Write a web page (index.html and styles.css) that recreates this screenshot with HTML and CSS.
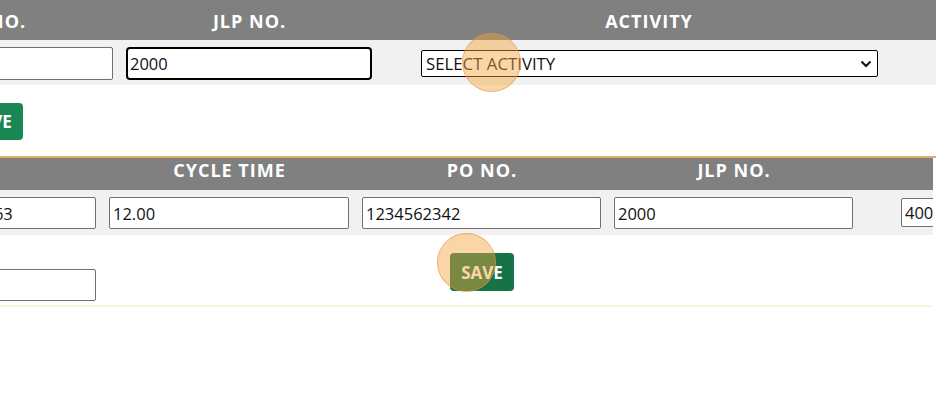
FILE: index.html
```html
<!DOCTYPE html>
<html lang="en">
<head>
<meta charset="utf-8">
<title>Entry</title>
<link rel="stylesheet" href="styles.css">
</head>
<body>
<div class="viewport">
  <section class="sec sec1">
    <div class="grid g1 head">
      <div class="th">PO NO.</div>
      <div class="th">JLP NO.</div>
      <div class="th">ACTIVITY</div>
      <div class="th"></div>
    </div>
    <div class="grid g1 row">
      <div class="td c-a"><input class="inp" type="text" value=""></div>
      <div class="td c-b"><input class="inp focus" type="text" value="2000"></div>
      <div class="td c-c">
        <div class="sel-wrap">
          <select class="sel"><option>SELECT ACTIVITY</option></select>
          <svg class="chev" width="12" height="8" viewBox="0 0 12 8"><path d="M1.5 1.5 L6 6 L10.5 1.5" fill="none" stroke="#111" stroke-width="2"/></svg>
        </div>
      </div>
      <div class="td"></div>
    </div>
    <div class="grid g1 actions">
      <div class="act-cell"><button class="btn">SAVE</button></div>
    </div>
  </section>

  <section class="sec sec2">
    <div class="grid g2 head">
      <div class="th"></div>
      <div class="th">CYCLE TIME</div>
      <div class="th">PO NO.</div>
      <div class="th">JLP NO.</div>
      <div class="th"></div>
    </div>
    <div class="grid g2 row">
      <div class="td c-a"><input class="inp" type="text" value="HOUSING-ASSY-763"></div>
      <div class="td c-n"><input class="inp" type="text" value="12.00"></div>
      <div class="td c-n"><input class="inp" type="text" value="1234562342"></div>
      <div class="td c-n"><input class="inp" type="text" value="2000"></div>
      <div class="td c-last"><input class="inp small" type="text" value="4000"></div>
    </div>
    <div class="grid g2 actions">
      <div class="act-cell c-a"><input class="inp low" type="text" value=""></div>
      <div class="act-cell"></div>
      <div class="act-cell"><button class="btn dark">SAVE</button></div>
    </div>
  </section>

  <span class="click click-1"></span>
  <span class="click click-2"></span>
</div>
</body>
</html>
```

FILE: styles.css
```css
* { box-sizing: border-box; }
html, body { margin: 0; padding: 0; background: #fff; }
body { font-family: "Open Sans", "Noto Sans", Arial, sans-serif; }

.viewport {
  position: relative;
  width: 936px;
  height: 406px;
  overflow: hidden;
}

.sec { overflow: hidden; }
.sec1 {
  margin-left: -138px;
  width: 1274px;
  border-bottom: 2px solid #dcb06c;
}
.sec2 {
  margin-left: -149px;
  width: 1082px;
  border-bottom: 2px solid #fbf5d4;
}

.grid { display: grid; }
.g1 { grid-template-columns: 258px 259px 540px 217px; }
.g2 { grid-template-columns: 252px 253px 252px 252px 273px; }

.head { background: #808080; }
.th {
  color: #fff;
  font-weight: 700;
  font-size: 18px;
  line-height: 24px;
  text-align: center;
  letter-spacing: 1px;
  white-space: nowrap;
}
.sec1 .head { height: 40px; padding-top: 9px; }
.sec2 .head { height: 32px; padding-top: 0; }

.row { background: #f1f1f1; height: 45px; }
.td { padding: 7px 7px 0 6px; }
.sec1 .td.c-c { padding: 10px 0 0 42px; }
.td.c-last { padding: 8px 0 0 41px; }

.inp {
  display: block;
  width: 100%;
  height: 32px;
  border: 1px solid #707070;
  border-radius: 2px;
  background: #fff;
  font-family: inherit;
  font-size: 16.5px;
  color: #111;
  padding: 0 3px;
  outline: none;
}
.sec1 .inp { height: 33px; }
.inp.focus {
  border: 2px solid #000;
  border-radius: 4px;
  padding: 0 2px;
}
.inp.small { width: 120px; height: 29px; }
.inp.low { margin-top: 34px; }

.sel-wrap {
  position: relative;
  width: 457px;
  height: 27px;
}
.sel {
  appearance: none;
  -webkit-appearance: none;
  display: block;
  width: 100%;
  height: 27px;
  border: 1px solid #000;
  border-radius: 2px;
  background: #fff;
  font-family: inherit;
  font-size: 16.8px;
  color: #111;
  padding: 0 4px;
  outline: none;
}
.chev {
  position: absolute;
  right: 6px;
  top: 10px;
  pointer-events: none;
}

.actions { align-items: start; }
.sec1 .actions { height: 71px; }
.sec2 .actions { height: 70px; }
.act-cell {
  display: flex;
  justify-content: center;
  padding-top: 18px;
}
.act-cell.c-a { display: block; padding: 0 7px 0 6px; }

.btn {
  width: 64px;
  height: 37px;
  border: none;
  border-radius: 4px;
  background: #198754;
  color: #fff;
  font-family: inherit;
  font-weight: 700;
  font-size: 17px;
  padding: 0;
}
.btn.dark { background: #157347; height: 38px; }

.click {
  position: absolute;
  width: 59px;
  height: 59px;
  border-radius: 50%;
  background: rgba(245, 165, 60, 0.45);
  border: 1.5px solid rgba(225, 145, 70, 0.55);
}
.click-1 { left: 462px; top: 33px; }
.click-2 { left: 437px; top: 233px; }
```
